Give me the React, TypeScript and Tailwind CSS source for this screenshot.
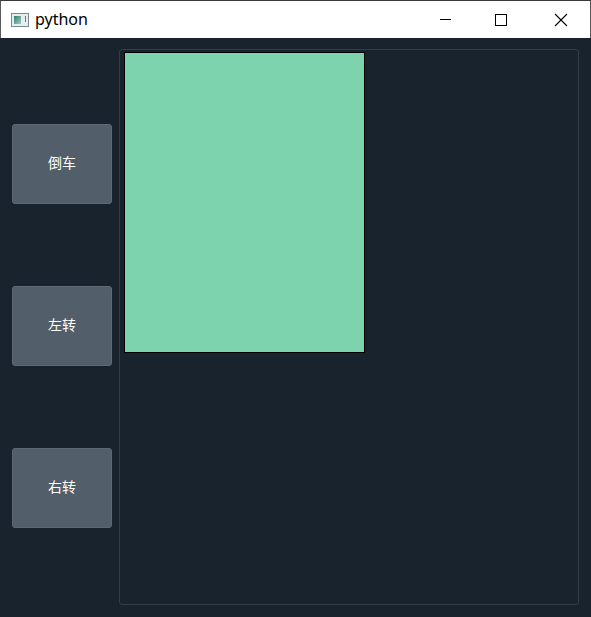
export default function App() {
    return (
        <div className="w-[591px] h-[617px] bg-[#19232d] flex flex-col border-t border-[#3a3a3a] font-['Noto_Sans','Noto_Sans_CJK_SC',sans-serif] overflow-hidden">
            <div className="h-[37px] bg-white flex items-center shrink-0 border-l border-r border-[#5a5a5a]">
                <div className="ml-[10px] w-[18px] h-[14px] border border-[#7a8a90] bg-[#e8eef0] flex items-center p-[2px] gap-[1px]">
                    <div className="w-[8px] h-full bg-gradient-to-br from-[#2f7f6e] to-[#9fd0c4]" />
                    <div className="w-[1px] h-[6px] bg-[#6a7a80] ml-[3px] self-start" />
                </div>
                <span className="ml-[6px] text-[16px] text-black leading-none pb-[2px]">python</span>
                <div className="ml-auto flex h-full">
                    <div className="w-[58px] h-full flex items-center justify-center">
                        <div className="w-[11px] h-[1px] bg-black" />
                    </div>
                    <div className="w-[58px] h-full flex items-center justify-center pr-[4px]">
                        <div className="w-[12px] h-[12px] border border-black" />
                    </div>
                    <div className="w-[58px] h-full flex items-center justify-center">
                        <svg width="14" height="14" viewBox="0 0 14 14">
                            <path d="M1 1 L13 13 M13 1 L1 13" stroke="black" strokeWidth="1.1" />
                        </svg>
                    </div>
                </div>
            </div>
            <div className="flex flex-1 pt-[11px] pb-[12px] pl-[12px] pr-[12px]">
                <div className="w-[100px] flex flex-col gap-[82px] pt-[75px]">
                    {["倒车", "左转", "右转"].map((t) => (
                        <div key={t} className="h-[80px] bg-[#525e69] border border-[#5d6974] rounded-[3px] flex items-center justify-center text-white text-[14px] pb-[3px]">
                            {t}
                        </div>
                    ))}
                </div>
                <div className="ml-[7px] flex-1 border border-[#323d48] rounded-[3px] pl-[4px] pt-[2px]">
                    <div className="w-[241px] h-[301px] bg-[#7dd3ae] border border-black" />
                </div>
            </div>
        </div>
    );
}
